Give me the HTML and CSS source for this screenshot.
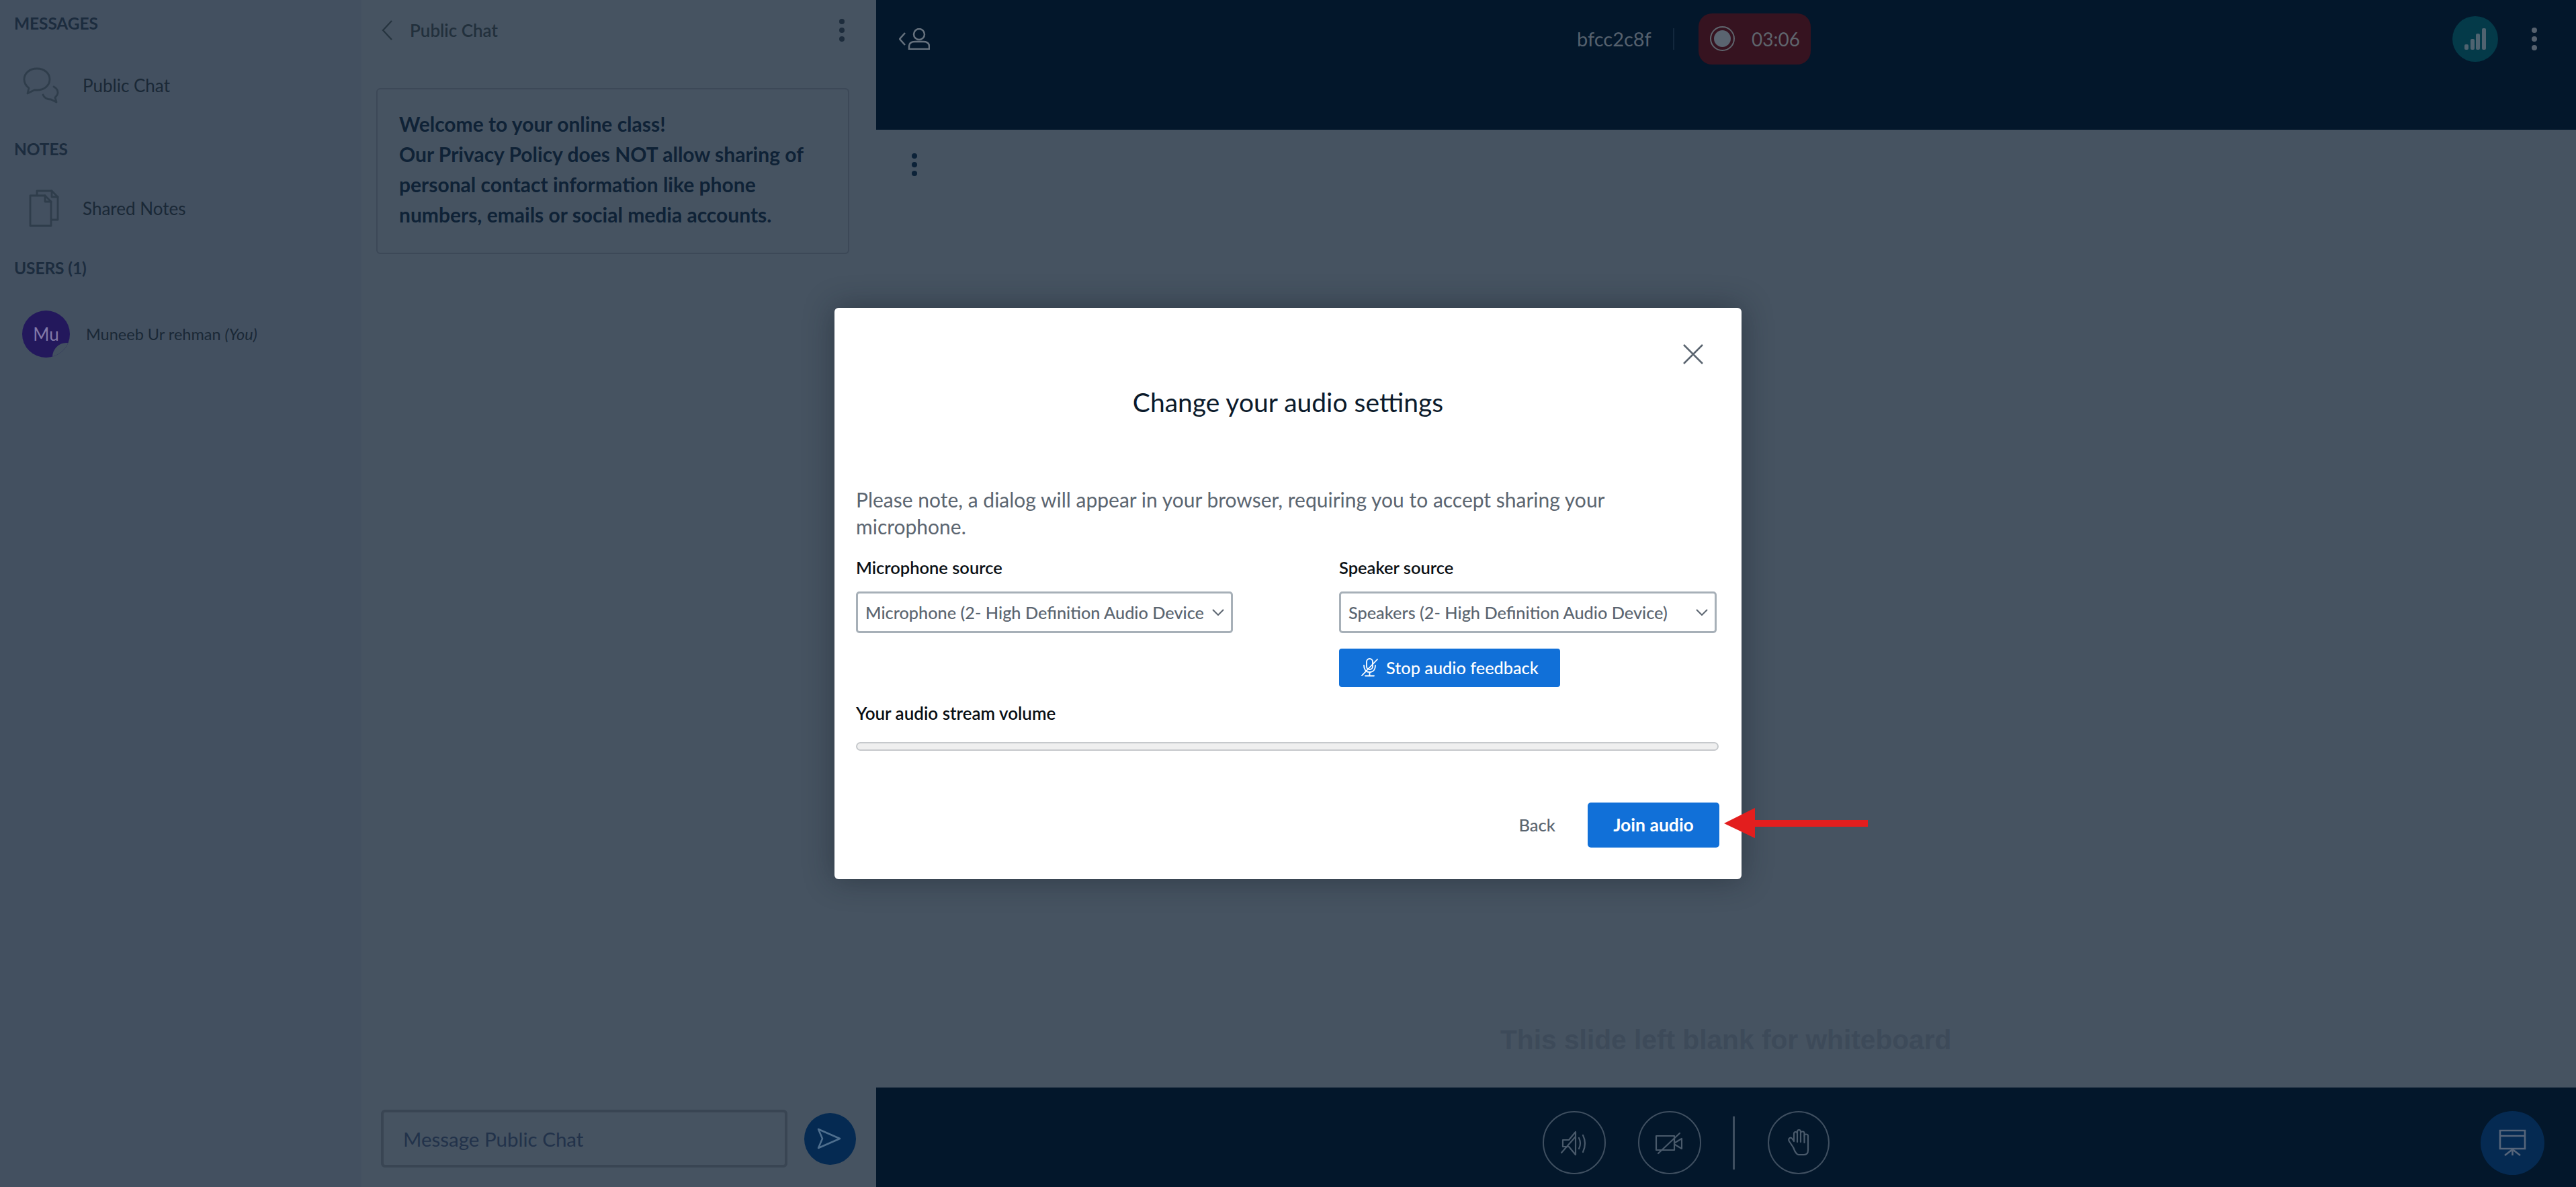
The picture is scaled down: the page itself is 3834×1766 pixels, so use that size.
FILE: index.html
```html
<!DOCTYPE html>
<html lang="en">
<head>
<meta charset="utf-8">
<title>Change your audio settings</title>
<link rel="stylesheet" href="styles.css">
</head>
<body>
<div class="app">
  <aside class="sidebar">
    <div class="section-title first">MESSAGES</div>
    <div class="nav-item chat-item">
      <svg class="nav-icon" width="54" height="54" viewBox="0 0 54 54"><path d="M21 2C10 2 2 9 2 18c0 6 3 10 7 13l-2 8 10-5h4c11 0 19-7 19-16S32 2 21 2Z"/><path d="M46 29c4 2 6 5 6 9 0 3-2 5-4 7l2 7-8-4c-5 0-10-2-12-7"/></svg>
      <span>Public Chat</span>
    </div>
    <div class="section-title notes-title">NOTES</div>
    <div class="nav-item notes-item">
      <svg class="nav-icon" width="54" height="56" viewBox="0 0 54 56"><path d="M11 9h22l9 9v36H11Z"/><path d="M33 9v9h9"/><path d="M21 8V2h22l9 9v34H43"/><path d="M43 2v9h9"/></svg>
      <span>Shared Notes</span>
    </div>
    <div class="section-title users-title">USERS (1)</div>
    <div class="user-row">
      <div class="avatar">Mu</div>
      <span class="user-name">Muneeb Ur rehman <em>(You)</em></span>
    </div>
  </aside>

  <section class="chat-panel">
    <header class="chat-header">
      <div class="chat-back">
        <svg width="17" height="30" viewBox="0 0 17 30"><path class="line-dim" d="M15 1 2 15l13 14"/></svg>
        <span>Public Chat</span>
      </div>
      <div class="dots dots-light"><i></i><i></i><i></i></div>
    </header>
    <div class="welcome">
      Welcome to your online class!<br>
      Our Privacy Policy does NOT allow sharing of<br>
      personal contact information like phone<br>
      numbers, emails or social media accounts.
    </div>
    <div class="chat-input-row">
      <div class="chat-input">Message Public Chat</div>
      <div class="send-btn">
        <svg width="77" height="77" viewBox="0 0 77 77"><path class="line-send" d="M21 24 53 38 21 52l6-14Z"/></svg>
      </div>
    </div>
  </section>

  <main class="stage">
    <header class="topbar">
      <svg class="user-toggle" width="46" height="32" viewBox="0 0 46 32"><path d="M9 7 1 16l8 9"/><ellipse cx="30" cy="9" rx="8" ry="8"/><path d="M15 31v-4c0-5 4-7 9-7h12c5 0 9 2 9 7v4Z"/></svg>
      <div class="session">
        <span class="session-name">bfcc2c8f</span>
        <span class="session-divider"></span>
        <div class="record-pill">
          <span class="record-icon"></span>
          <span>03:06</span>
        </div>
      </div>
      <div class="top-right">
        <div class="signal">
          <svg width="32" height="32" viewBox="0 0 32 32"><rect x="0" y="24" width="6" height="8" rx="2"/><rect x="9" y="16" width="6" height="16" rx="2"/><rect x="17" y="8" width="6" height="24" rx="2"/><rect x="26" y="0" width="6" height="32" rx="2"/></svg>
        </div>
        <div class="dots dots-top"><i></i><i></i><i></i></div>
      </div>
    </header>
    <div class="slide">
      <div class="dots dots-slide"><i></i><i></i><i></i></div>
      <div class="slide-note">This slide left blank for whiteboard</div>
    </div>
    <footer class="actions">
      <div class="round-btn">
        <svg width="90" height="90" viewBox="2 2 90 90"><path d="M30 43h9L49 31v34L39 53h-9Z"/><path d="M28 62 49 38"/><path d="M54 40q4 8 0 16"/><path d="M60 36q6 12 0 25"/></svg>
      </div>
      <div class="round-btn">
        <svg width="90" height="90" viewBox="2 2 90 90"><path d="M27 37h27v21H27Z"/><path d="M55 47l10-6v15l-10-6"/><path d="M30 63 62 33"/></svg>
      </div>
      <span class="actions-divider"></span>
      <div class="round-btn hand">
        <svg width="88" height="90" viewBox="2 2 88 90"><path d="M38 54 32 45q-2-3 1-5 2-1 4 2l2 3V34q0-3 2.500-3t2.500 3v-3q0-3 2.500-3t2.500 3v2q0-2.500 3-2.500 2.500 0 2.500 2.500v4q0-2.500 2.500-2.500 3 0 3 2.500v21q0 7-6 7h-8q-4 0-8-11Z"/><path d="M44 34v12M49 33v13M54.500 37v10"/></svg>
      </div>
      <div class="present-btn">
        <svg width="95" height="95" viewBox="0 0 95 95"><path d="M29 29h37v27H29Z"/><path d="M29 37h37"/><path d="M47.500 57 36 66M47.500 57v9M47.500 57 59 66"/></svg>
      </div>
    </footer>
  </main>
</div>

<div class="overlay">
  <div class="dialog">
    <div class="close-row">
      <svg width="30" height="30" viewBox="0 0 30 30"><path d="M1 1 29 29M29 1 1 29"/></svg>
    </div>
    <h1 class="dialog-title">Change your audio settings</h1>
    <p class="dialog-note">Please note, a dialog will appear in your browser, requiring you to accept sharing your<br>microphone.</p>
    <div class="sources">
      <div class="source source-mic">
        <div class="field-label">Microphone source</div>
        <div class="select">
          <span class="select-text">Microphone (2- High Definition Audio Device</span>
          <svg width="18" height="10" viewBox="0 0 18 10"><path d="M1 1l8 8 8-8"/></svg>
        </div>
      </div>
      <div class="source source-speaker">
        <div class="field-label">Speaker source</div>
        <div class="select">
          <span class="select-text">Speakers (2- High Definition Audio Device)</span>
          <svg width="18" height="10" viewBox="0 0 18 10"><path d="M1 1l8 8 8-8"/></svg>
        </div>
        <div class="feedback-btn">
          <svg width="26" height="28" viewBox="0 0 26 28"><rect x="8" y="1" width="9" height="16" rx="4.500"/><path d="M4 11c0 6 3 10 8.500 10S21 17 21 11"/><path d="M12.500 21v5M6 26.500h13"/><path d="M1 26 24 2"/></svg>
          <span>Stop audio feedback</span>
        </div>
      </div>
    </div>
    <div class="field-label volume-label">Your audio stream volume</div>
    <div class="volume-bar"></div>
    <div class="dialog-footer">
      <span class="back-btn">Back</span>
      <span class="join-btn">Join audio</span>
    </div>
    <svg class="annotation-arrow" width="214" height="45" viewBox="0 0 214 45"><path d="M0 23 46 0v18h168v10H46v17Z"/></svg>
  </div>
</div>
</body>
</html>
```
FILE: styles.css
```css
* { box-sizing: border-box; }
html, body { margin: 0; padding: 0; width: 3834px; height: 1766px; overflow: hidden; }
body { font-family: Lato, "Liberation Sans", sans-serif; background: #465361; position: relative; }

.app { display: flex; width: 100%; height: 100%; }

/* Sidebar */
.sidebar { width: 538px; flex: none; background: #435060; color: #1a2836; padding-left: 21px; }
.section-title { height: 40px; line-height: 40px; font-size: 24.500px; font-weight: 700; color: #1c2c3e; letter-spacing: -0.1px; }
.section-title.first { margin-top: 15px; }
.notes-title { margin-top: 48px; }
.users-title { margin-top: 41px; }
.nav-item { display: flex; align-items: center; gap: 35px; margin-left: 13px; font-size: 26px; }
.chat-item { margin-top: 45px; height: 54px; }
.notes-item { margin-top: 40px; height: 56px; }
.nav-icon { flex: none; fill: none; stroke: #2f3d4b; stroke-width: 2.800px; stroke-linejoin: round; stroke-linecap: round; }
.user-row { display: flex; align-items: center; gap: 24px; margin-top: 43px; margin-left: 12px; height: 70px; }
.avatar { width: 71px; height: 70px; border-radius: 50%; background: #23185c; color: #837aa8; font-size: 26px; display: flex; align-items: center; justify-content: center; position: relative; overflow: hidden; flex: none; }
.avatar::after { content: ""; position: absolute; right: -16px; bottom: -20px; width: 42px; height: 42px; border-radius: 50%; background: #435060; }
.user-name { font-size: 23.500px; color: #1a2836; }
.user-name em { font-style: italic; }

/* Chat */
.chat-panel { width: 766px; flex: none; display: flex; flex-direction: column; background: #465361; }
.chat-header { height: 90px; flex: none; display: flex; align-items: center; justify-content: space-between; padding: 0 47px 0 30px; }
.chat-back { display: flex; align-items: center; gap: 25px; font-size: 26px; font-weight: 600; color: #22303c; }
.line-dim { fill: none; stroke: #26343f; stroke-width: 2.200px; }
.dots { display: flex; flex-direction: column; gap: 5px; }
.dots i { display: block; width: 8px; height: 8px; border-radius: 50%; background: #1d2c3c; }
.dots-top i { background: #56616e; }
.dots-slide i { background: #0c2238; }
.welcome { margin: 41px 0 0 22px; width: 704px; height: 247px; border: 2px solid #3c4857; border-radius: 6px; padding: 29px 32px 0; font-size: 30px; font-weight: 700; line-height: 45px; color: #0f2236; }
.chat-input-row { margin-top: auto; display: flex; align-items: center; gap: 25px; padding: 0 0 29px 29px; }
.chat-input { width: 605px; height: 86px; border: 4px solid #394553; border-radius: 6px; display: flex; align-items: center; padding-left: 29px; font-size: 29.500px; color: #22324a; }
.send-btn { width: 77px; height: 77px; border-radius: 50%; background: #052a52; flex: none; }
.line-send { fill: none; stroke: #4f6f8e; stroke-width: 2.500px; stroke-linejoin: round; }

/* Stage */
.stage { flex: 1; min-width: 0; display: flex; flex-direction: column; }
.topbar { height: 193px; flex: none; background: #03172b; display: flex; align-items: center; padding: 0 58px 78px 34px; }
.user-toggle { flex: none; fill: none; stroke: #67727e; stroke-width: 2.500px; }
.session { display: flex; align-items: center; margin-left: 963px; color: #56616e; }
.session-name { font-size: 29px; width: 110px; }
.session-divider { width: 2px; height: 32px; background: #13283d; margin: 0 36px 0 33px; }
.record-pill { width: 167px; height: 76px; border-radius: 20px; background: #361320; display: flex; align-items: center; gap: 25px; padding-left: 17px; font-size: 28px; color: #5f656d; }
.record-icon { width: 37px; height: 37px; border-radius: 50%; border: 2px solid #5f656d; position: relative; flex: none; }
.record-icon::after { content: ""; position: absolute; inset: 4px; border-radius: 50%; background: #5a6470; }
.top-right { margin-left: auto; display: flex; align-items: center; gap: 50px; }
.signal { width: 68px; height: 68px; border-radius: 50%; background: #043a49; display: flex; align-items: center; justify-content: center; }
.signal svg { fill: #4f6370; }
.slide { flex: 1; display: flex; flex-direction: column; justify-content: space-between; background: #465361; padding: 35px 0 41px 53px; }
.slide-note { margin-left: 876px; line-height: 60px; font-family: "Liberation Sans", sans-serif; font-weight: 700; font-size: 40.700px; color: #3d4a59; }
.actions { height: 148px; flex: none; background: #03172b; display: flex; align-items: flex-start; padding: 35px 47px 0 992px; }
.round-btn { width: 94px; height: 94px; border-radius: 50%; border: 2px solid #3f4f60; flex: none; margin-right: 48px; }
.round-btn.hand { width: 92px; margin-right: 0; }
.round-btn svg { display: block; fill: none; stroke: #4a5a6b; stroke-width: 2.200px; stroke-linejoin: round; stroke-linecap: round; }
.actions-divider { width: 3px; height: 79px; background: #3f4f60; flex: none; margin: 8px 49px 0 -1px; }
.present-btn { width: 95px; height: 95px; border-radius: 50%; background: #052a52; margin-left: auto; flex: none; }
.present-btn svg { fill: none; stroke: #56657a; stroke-width: 2.600px; display: block; }

/* Modal */
.overlay { position: absolute; inset: 0; display: flex; align-items: center; justify-content: center; }
.dialog { width: 1350px; height: 850px; background: #fff; border-radius: 6px; box-shadow: 0 0 45px rgba(20, 28, 38, 0.45); padding: 54px 32px 0; position: relative; }
.close-row { display: flex; justify-content: flex-end; padding-right: 25px; height: 30px; }
.close-row svg { fill: none; stroke: #5b6570; stroke-width: 2.500px; }
.dialog-title { margin: 31px 0 0; text-align: center; font-size: 39px; font-weight: 400; line-height: 50px; color: #0b1a2b; }
.dialog-note { margin: 100px 0 0; font-size: 30px; line-height: 40px; color: #5b6570; }
.sources { display: flex; gap: 158px; margin-top: 24px; }
.source-mic { width: 561px; flex: none; }
.source-speaker { width: 562px; flex: none; }
.field-label { font-size: 25.500px; line-height: 34px; font-weight: 600; color: #0a0f14; }
.select { margin-top: 19px; height: 62px; border: 3px solid #a7b0b8; border-radius: 5px; display: flex; align-items: center; justify-content: space-between; padding: 0 10px 0 11px; }
.select svg { flex: none; fill: none; stroke: #5b6570; stroke-width: 2px; }
.select-text { font-size: 25.300px; font-weight: 500; color: #5b6570; white-space: nowrap; }
.feedback-btn { margin-top: 23px; width: 329px; height: 57px; border-radius: 4px; background: #1170d8; color: #fff; display: flex; align-items: center; gap: 11px; padding: 0 0 2px 33px; font-size: 25.300px; font-weight: 500; }
.feedback-btn svg { flex: none; fill: none; stroke: #fff; stroke-width: 1.800px; stroke-linecap: round; }
.volume-label { margin-top: 22px; font-size: 26px; }
.volume-bar { margin-top: 26px; width: 1284px; height: 13px; border: 2px solid #c6c9cc; border-radius: 7px; background: #efefef; }
.dialog-footer { margin-top: 77px; display: flex; align-items: center; justify-content: flex-end; gap: 48px; padding-right: 1px; }
.back-btn { font-size: 25.600px; font-weight: 500; color: #5b6570; padding-bottom: 2px; }
.join-btn { width: 196px; height: 67px; border-radius: 5px; background: #1170d8; color: #fff; display: flex; align-items: center; justify-content: center; padding-bottom: 2px; font-size: 26.500px; font-weight: 700; }
.annotation-arrow { position: absolute; left: 1324px; top: 744px; fill: #e31e1e; }
```
